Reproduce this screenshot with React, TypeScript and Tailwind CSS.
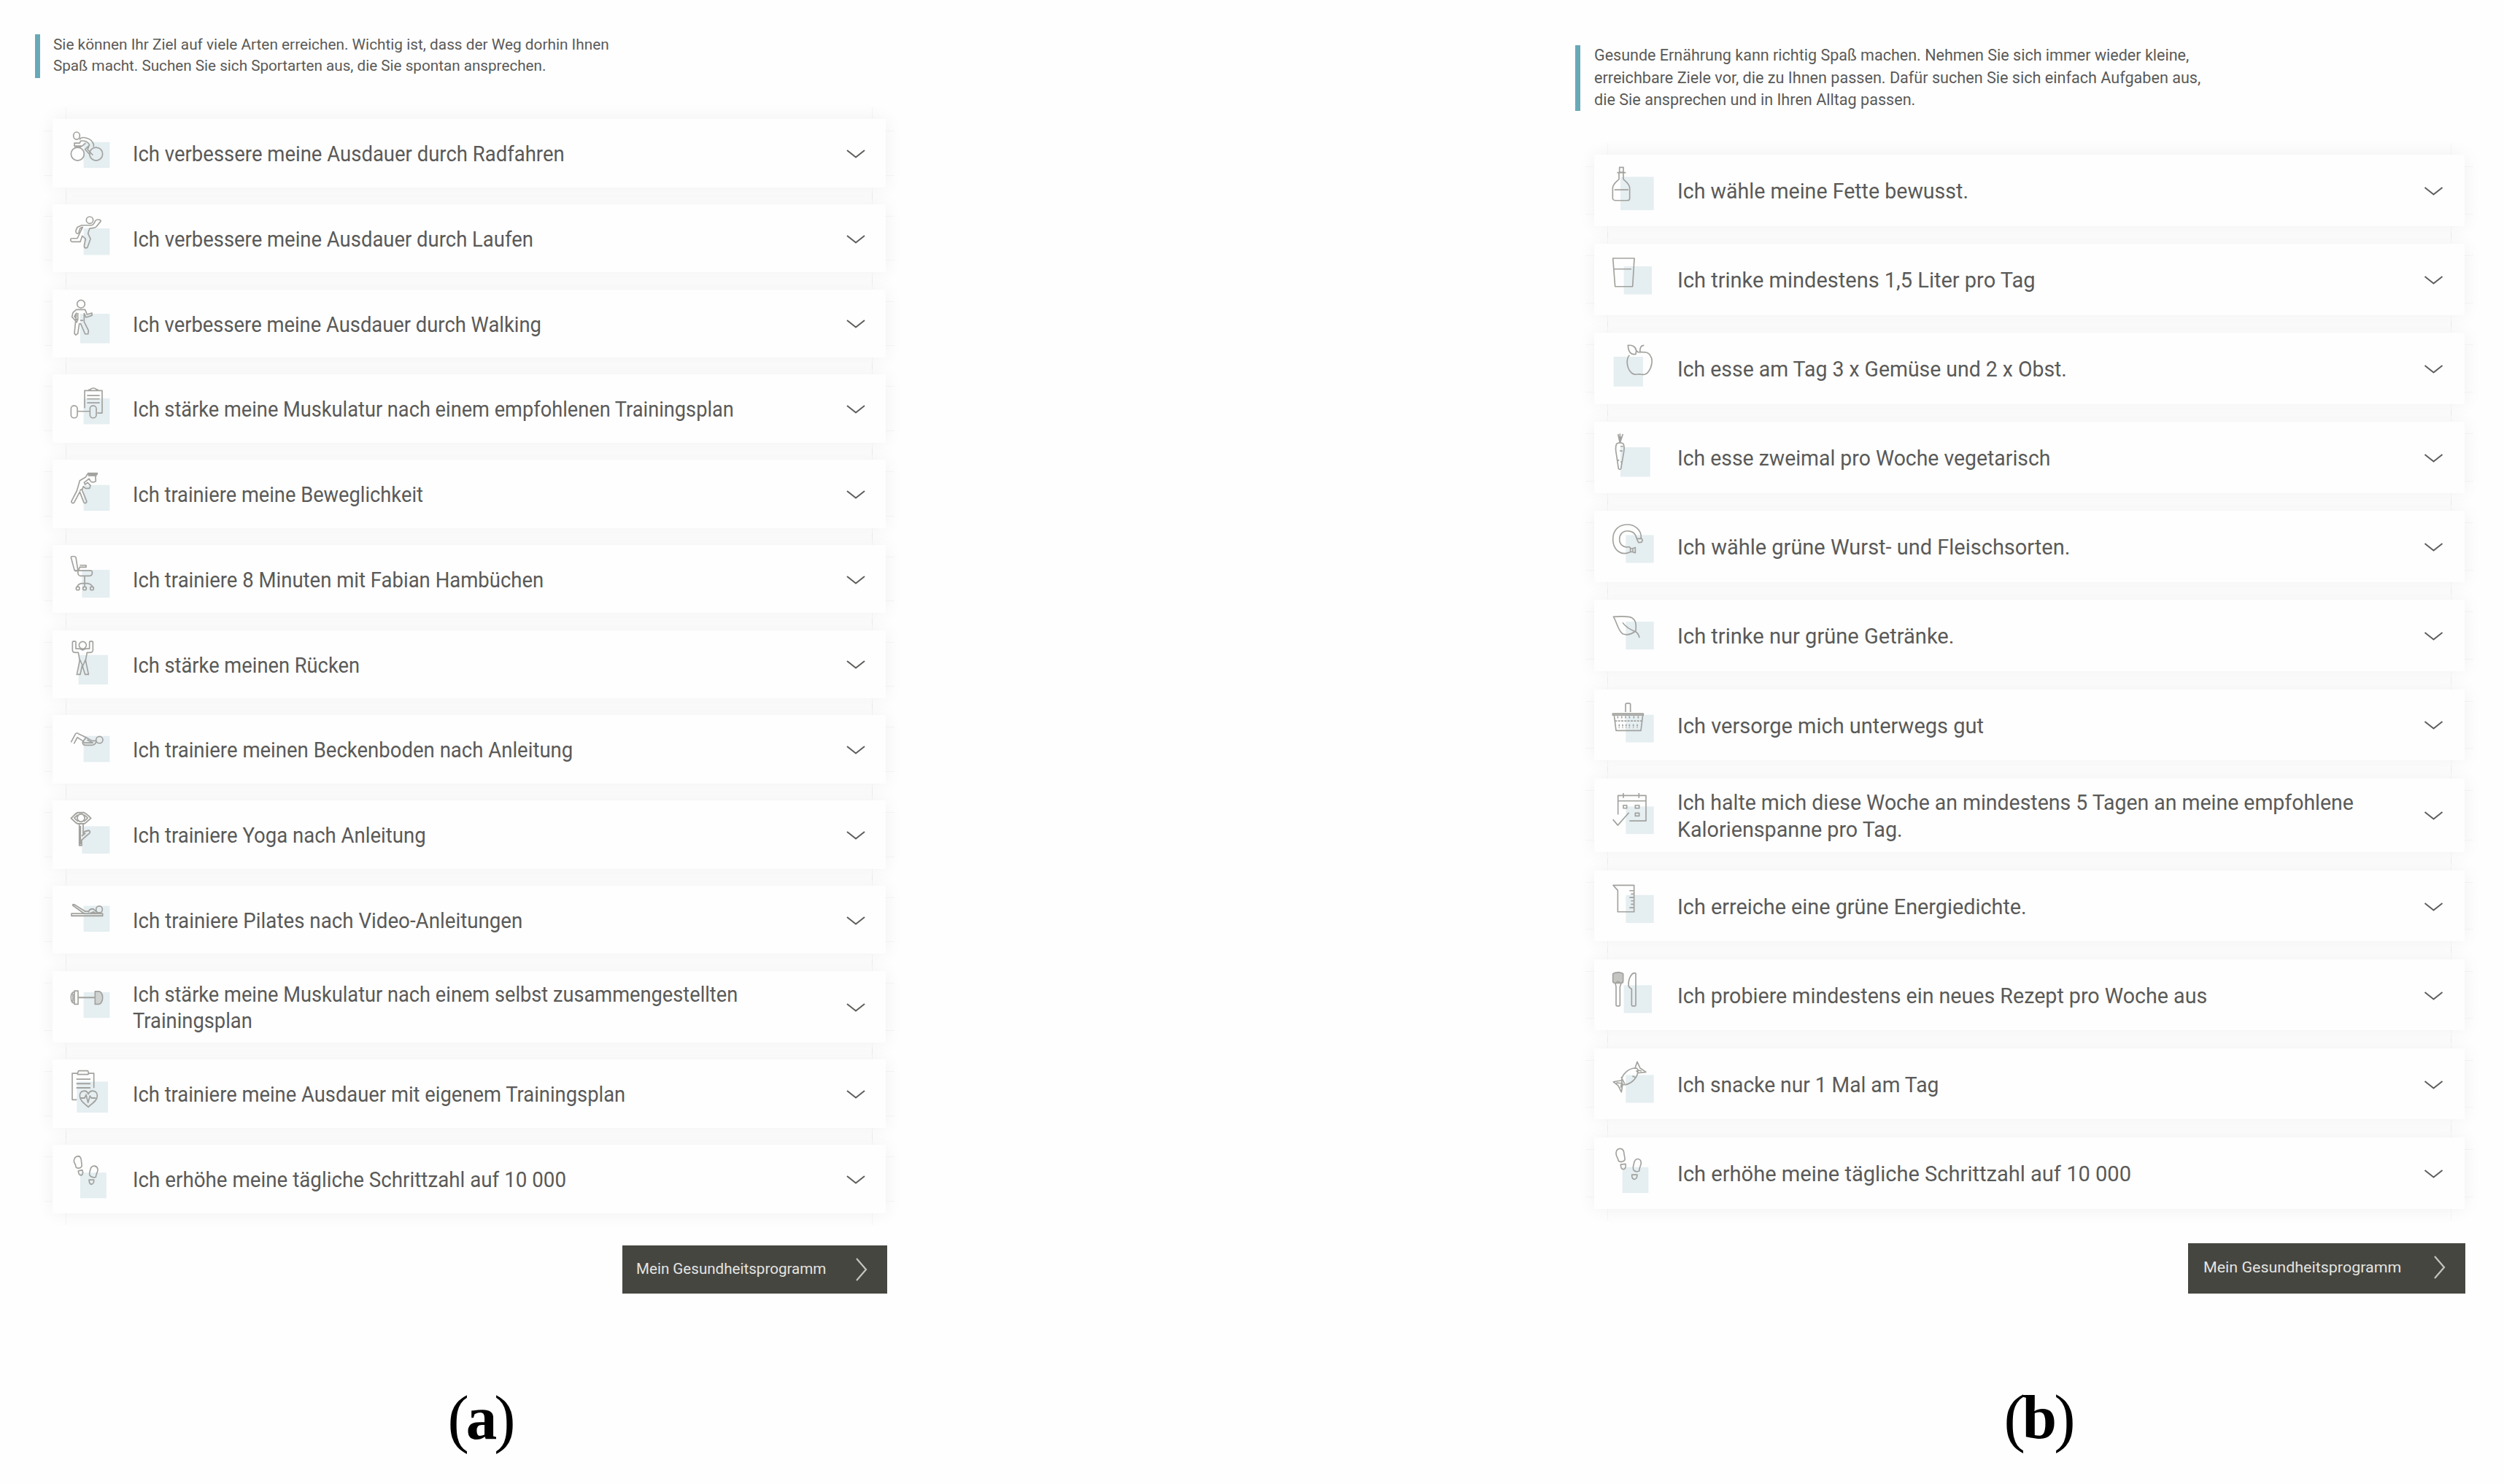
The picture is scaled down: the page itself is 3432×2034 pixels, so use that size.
import { useLayoutEffect, useRef, type ReactNode } from "react";

/* A single line of text, condensed horizontally to the given width. */
function FitLine({ text, width }: { text: string; width: number }) {
  const ref = useRef<HTMLSpanElement>(null);
  useLayoutEffect(() => {
    const el = ref.current;
    if (el) el.style.transform = `scaleX(${width / el.offsetWidth})`;
  }, [text, width]);
  return (
    <span className="block" style={{ width }}>
      <span ref={ref} className="inline-block origin-left whitespace-nowrap align-top">
        {text}
      </span>
    </span>
  );
}

type Line = [string, number];
type Item = {
  lines: Line[];
  /* origin and height of the drawing area */
  view: [number, number];
  /* tinted square behind the drawing */
  tint: [number, number, number, number];
  art: ReactNode;
};

const exercise: Item[] = [
  {
    lines: [["Ich verbessere meine Ausdauer durch Radfahren", 592]],
    view: [39, 280],
    tint: [164, 134, 107, 106],
    art: (
      <>
        <circle cx="139" cy="183" r="27" />
        <circle cx="215" cy="183" r="27" />
        <ellipse cx="135" cy="108" rx="13" ry="15" />
        <path d="M147 124c8-16 50-8 58 20v10M150 130c16-4 32 2 38 16l-18 18 20 22M152 128l-4 10h-22v12h32l14-12M158 150l-12 6h-20M186 150l-6 14 22 24" />
      </>
    ),
  },
  {
    lines: [["Ich verbessere meine Ausdauer durch Laufen", 549]],
    view: [390, 280],
    tint: [164, 489, 107, 109],
    art: (
      <>
        <circle cx="189" cy="455" r="14" />
        <path d="M156 476h38c10 0 14-8 18-18 6-8 24-6 22 2l-18 22c-8 8-18 4-28 8l-6 20 10 22-12 34c-4 6-14 4-14-4l6-30-14-12-8 24h-34c-8-2-8-14 0-14h22l14-30 8-16-10 4-4 10-2 10c-8 6-14-2-12-10l6-14z" />
      </>
    ),
  },
  {
    lines: [["Ich verbessere meine Ausdauer durch Walking", 560]],
    view: [740, 280],
    tint: [150, 839, 121, 121],
    art: (
      <>
        <circle cx="153" cy="799" r="16" />
        <path d="M134 822h36l8 20 20-6v10l-24 8-8-16v34l18 36-2 14h-12l-18-42h-6l-6 40-8 6-6-6 8-84-8 14 12 16-2 8-20-22 4-18zM140 836v30M150 866h12" />
      </>
    ),
  },
  {
    lines: [["Ich stärke meine Muskulatur nach einem empfohlenen Trainingsplan", 824]],
    view: [1089, 280],
    tint: [164, 1188, 107, 106],
    art: (
      <>
        <path d="M168 1228v-72h18v-4h6c2-8 22-8 24 0h6v4h18v92h-20M186 1156h34M178 1176h52M178 1190h52M178 1206h52M138 1241h52" />
        <rect x="112" y="1218" width="26" height="50" rx="12" />
        <rect x="190" y="1218" width="26" height="50" rx="12" />
      </>
    ),
  },
  {
    lines: [["Ich trainiere meine Beweglichkeit", 398]],
    view: [30, 280],
    tint: [164, 134, 107, 106],
    art: (
      <>
        <path d="M180 88h42M182 94h36" strokeWidth="9" />
        <path d="M180 88l-8 14-24 14-12 42-22 42c-2 8 8 12 12 4l22-42 16 42c4 8 14 4 12-4l-18-44 4-16 10 8h16l4-12-12-12-10 8-4-8 20-16 6 10c4 6 16 6 22 0l-2-22M148 158l8-8" />
      </>
    ),
  },
  {
    lines: [["Ich trainiere 8 Minuten mit Fabian Hambüchen", 563]],
    view: [381, 280],
    tint: [157, 483, 114, 114],
    art: (
      <>
        <path d="M112 432c0-6 18-6 20 0l8 50c0 6-12 8-14 2zM126 484l14 4M148 464h26v8h-26l-6 14M142 486h52c8 0 8 22-6 22h-38c-8 0-12-12-8-22zM168 508v42M138 552c2-10 10-14 30-14s28 4 32 14" />
        <circle cx="140" cy="559" r="7" />
        <circle cx="168" cy="559" r="7" />
        <circle cx="198" cy="559" r="7" />
      </>
    ),
  },
  {
    lines: [["Ich stärke meinen Rücken", 311]],
    view: [731, 280],
    tint: [143, 832, 121, 121],
    art: (
      <>
        <circle cx="160" cy="792" r="15" />
        <path d="M118 780c0-6 14-6 14 0v26h14l14 6 14-6h14v-26c0-6 14-6 14 0v32c0 6-6 10-12 10h-12l-6 32 12 58h-14l-12-38-8 38h-14l12-58-6-32h-12c-8 0-12-4-12-10zM148 850l14 30M174 846l-12 28" />
      </>
    ),
  },
  {
    lines: [["Ich trainiere meinen Beckenboden nach Anleitung", 603]],
    view: [1080, 280],
    tint: [164, 1166, 107, 107],
    art: (
      <>
        <circle cx="229" cy="1182" r="14" />
        <path d="M112 1192l18-34c4-6 10-4 14 0l30 14 24 14h18M124 1198l14-26 22 14 6 8M174 1172l-14 18c-2 8 4 14 12 14h24c12 0 18-8 20-16M164 1194h40M178 1182l20 10" />
      </>
    ),
  },
  {
    lines: [["Ich trainiere Yoga nach Anleitung", 402]],
    view: [44, 245],
    tint: [157, 137, 114, 98],
    art: (
      <>
        <path d="M112 108c12-8 18-18 28-20h26c12 4 18 12 28 20-12 8-18 16-28 20h-26c-12-4-16-12-28-20zM124 108l16-12M182 108l-16-12M126 108l16 12M180 108l-16 12" />
        <ellipse cx="153" cy="107" rx="15" ry="14" />
        <path d="M146 130v76h10v-20l32-24c4-4 2-10-4-10l-16 4-6 8v-34M156 172l16-10M151 136v66" />
      </>
    ),
  },
  {
    lines: [["Ich trainiere Pilates nach Video-Anleitungen", 534]],
    view: [350, 245],
    tint: [164, 422, 107, 93],
    art: (
      <>
        <ellipse cx="228" cy="435" rx="13" ry="12" />
        <path d="M114 450h128v8H114zM118 420c2-4 8-2 12 0l40 22h14M118 420l48 30M184 446c2-14 18-16 26-8l10 10M188 450l16-6 10 6" />
      </>
    ),
  },
  {
    lines: [
      ["Ich stärke meine Muskulatur nach einem selbst zusammengestellten", 829],
      ["Trainingsplan", 164],
    ],
    view: [657, 245],
    tint: [164, 733, 107, 92],
    art: (
      <>
        <path d="M126 728h15v48h-15zM126 732c-8 0-14 6-14 20s6 20 14 20M120 738v28M141 752h70" />
        <path d="M211 730h16c8 0 15 10 15 22s-7 24-15 24h-16z" fill="#cfd4d3" />
      </>
    ),
  },
  {
    lines: [["Ich trainiere meine Ausdauer mit eigenem Trainingsplan", 675]],
    view: [975, 245],
    tint: [136, 1055, 128, 111],
    art: (
      <path d="M136 1120h-19v-95h22l4-9h38l4 9h21v53M139 1025v4h44v-4M134 1046h58M134 1062h58M134 1077h58M183 1146c-18-14-35-24-35-40 0-20 28-24 35-6 8-18 37-14 37 6 0 16-19 26-37 40zM148 1114h20l6-12 8 28 8-24 6 8h18" />
    ),
  },
  {
    lines: [["Ich erhöhe meine tägliche Schrittzahl auf 10 000", 594]],
    view: [1278, 245],
    tint: [150, 1378, 107, 92],
    art: (
      <path d="M132 1358c0-10-8-14-8-22 2-18 26-24 30-4 0 10 4 18 2 24-6 8-20 8-24 2zM142 1372l16-3c4 8 4 14-2 18-8 2-14-4-14-15zM188 1386c-2-10 4-16 6-26 8-10 26-6 28 6 2 10-8 16-8 28-8 4-22 0-26-8zM186 1404h20c2 18-20 24-20 0z" />
    ),
  },
];

const nutrition: Item[] = [
  {
    lines: [["Ich wähle meine Fette bewusst.", 399]],
    view: [6, 292],
    tint: [123, 97, 137, 137],
    art: (
      <path d="M119 58h16v20h-16zM109 80h36M117 82v24c-6 8-26 18-26 38v40c0 6 6 10 12 10h48c6 0 10-4 10-10v-40c0-20-20-30-26-38v-24M98 150h58" />
    ),
  },
  {
    lines: [["Ich trinke mindestens 1,5 Liter pro Tag", 491]],
    view: [375, 292],
    tint: [137, 468, 115, 115],
    art: <path d="M92 435h88l-7 116h-72zM98 479h70" />,
  },
  {
    lines: [["Ich esse am Tag 3 x Gemüse und 2 x Obst.", 534]],
    view: [740, 292],
    tint: [95, 839, 121, 122],
    art: (
      <path d="M160 832c-14 14-12 50 4 68 10 14 24 12 38 10 14 4 26 4 36-10 14-18 20-50 8-66-10-18-28-14-44-14h-8M154 792c16-2 32 4 34 22l-2 14c-20 4-30-8-32-36zM204 820c-2-16 2-28 16-28M188 814l8 6" />
    ),
  },
  {
    lines: [["Ich esse zweimal pro Woche vegetarisch", 511]],
    view: [1105, 292],
    tint: [123, 1210, 122, 121],
    art: (
      <path d="M121 1192l-8-36M121 1192v-38M121 1192l12-36M116 1166l5 12 6-12M107 1196c6-6 22-6 28 0 4 6 4 24 0 44l-10 58c-2 4-8 4-10 0l-8-54c-4-20-4-40 0-48zM123 1206h12M120 1224l12 2M110 1262l8 2M124 1270h8" />
    ),
  },
  {
    lines: [["Ich wähle grüne Wurst- und Fleischsorten.", 538]],
    view: [63, 292],
    tint: [145, 163, 115, 114],
    art: (
      <path d="M190 178c-4-20-18-32-38-32-20 0-33 14-33 34s14 34 33 32c6-2 12 0 12 8v12c-40 20-72-10-72-52s28-60 60-60 56 24 56 50l-2 8zM190 180l8 14 12-2 4-8-6-10M164 218h8l12-4v22l-12-4h-8M174 218v12" />
    ),
  },
  {
    lines: [["Ich trinke nur grüne Getränke.", 379]],
    view: [430, 292],
    tint: [145, 520, 115, 114],
    art: (
      <path d="M94 500c30-2 60-4 76 4 18 10 18 30 16 54-18 14-34 20-54 12-20-14-24-50-38-70zM132 524c12 18 30 28 54 38 8 4 12 12 15 24" />
    ),
  },
  {
    lines: [["Ich versorge mich unterwegs gut", 420]],
    view: [795, 292],
    tint: [145, 899, 115, 113],
    art: (
      <>
        <path d="M91 894h126v6H91zM97 900l8 64h102l8-64M144 888v-32c0-6 20-6 20 0v32" />
        <path d="M112 904v12M128 904v12M144 904v12M160 904v12M178 904v12M196 904v12M100 924h112M118 938v16M132 938v16M146 938v16M160 938v16M176 938v16M192 938v16" strokeDasharray="9 4" />
      </>
    ),
  },
  {
    lines: [
      ["Ich halte mich diese Woche an mindestens 5 Tagen an meine empfohlene", 927],
      ["Kalorienspanne pro Tag.", 309],
    ],
    view: [1162, 292],
    tint: [145, 1277, 115, 113],
    art: (
      <path d="M113 1310v-78h115v104h-68M113 1254h115M135 1222v20M199 1222v20M92 1330l20 24 46-52M135 1272h14v12h-14zM184 1272h16v12h-16zM184 1304h16v12h-16z" />
    ),
  },
  {
    lines: [["Ich erreiche eine grüne Energiedichte.", 479]],
    view: [39, 292],
    tint: [145, 140, 115, 115],
    art: (
      <path d="M93 100h86v109h-67v-88zM160 122h18M166 136h12M160 150h18M166 164h12M166 178h12M160 192h18" />
    ),
  },
  {
    lines: [["Ich probiere mindestens ein neues Rezept pro Woche aus", 726]],
    view: [405, 292],
    tint: [137, 511, 115, 114],
    art: (
      <>
        <path d="M92 464v30c0 6 6 8 10 8h24c6 0 8-4 8-8v-30l-8-4-12-2-14 2z" fill="#c4c5c2" />
        <path d="M102 502l3 16v74c0 6 16 6 16 0v-74l5-16M106 502c2-8 12-8 14 0M186 592V462c-16-6-30 20-30 46 0 8 4 14 13 18v66c0 6 17 6 17 0z" />
      </>
    ),
  },
  {
    lines: [["Ich snacke nur 1 Mal am Tag", 358]],
    view: [773, 292],
    tint: [145, 882, 115, 114],
    art: (
      <path d="M128 908c-2-28 30-56 60-54 6 2 8 10 6 20-6 26-32 48-58 48-6-2-8-8-8-14zM182 856l10-28 12 26 24 16-34 4M194 862l16 4M128 904l-34 6 20 16 13 26 5-34M106 914l20 2M124 934l4-18M126 890l14 28M188 864l8 10M172 886l12 6" />
    ),
  },
  {
    lines: [["Ich erhöhe meine tägliche Schrittzahl auf 10 000", 622]],
    view: [1138, 292],
    tint: [131, 1260, 107, 106],
    art: (
      <path d="M115 1234c-2-14-12-18-10-34 4-22 28-20 32-2 0 12 6 24 4 32-6 10-20 10-26 4zM124 1249l20-2c2 12 0 20-8 22-8 0-12-8-12-20zM176 1270c-4-12 2-18 4-32 8-18 26-14 28 4 0 12-8 18-8 34-8 4-20 2-24-6zM170 1291h22c0 26-24 24-22 0z" />
    ),
  },
];

function Card({ item, side }: { item: Item; side: "left" | "right" }) {
  const left = side === "left";
  const [y0, h] = item.view;
  const [tx, ty, tw, th] = item.tint;
  const tall = item.lines.length > 1;
  return (
    <li
      className={
        "relative flex items-center bg-[#fefefe] shadow-[0_0_24px_rgba(0,0,0,0.06)] " +
        (left ? (tall ? "h-[98.5px]" : "h-[93.5px]") : tall ? "h-[101.5px]" : "h-[97.5px]")
      }
    >
      <span className="absolute -top-4 left-[18px] h-4 w-px bg-black/3" />
      <span className="absolute -bottom-4 left-[18px] h-4 w-px bg-black/3" />
      <span className="absolute -top-4 right-[18px] h-4 w-px bg-black/3" />
      <span className="absolute -bottom-4 right-[18px] h-4 w-px bg-black/3" />
      <span className="absolute -left-3 top-4 h-px w-3 bg-black/3" />
      <span className="absolute -left-3 bottom-4 h-px w-3 bg-black/3" />
      <span className="absolute -right-3 top-4 h-px w-3 bg-black/3" />
      <span className="absolute -right-3 bottom-4 h-px w-3 bg-black/3" />
      <svg
        className={left ? "h-[93.5px] w-[90px] shrink-0 self-start" : "h-[97.5px] w-[90px] shrink-0 self-start"}
        viewBox={`${left ? 36 : 15} ${y0} 270 ${h}`}
        preserveAspectRatio="none"
        fill="none"
        stroke="#a2a29e"
        strokeWidth="5"
        strokeLinejoin="round"
      >
        <rect x={tx} y={ty} width={tw} height={th} fill="#e5eef1" stroke="none" />
        {item.art}
      </svg>
      <div
        className={
          "grow text-[30px] text-[#5a5a58] " +
          (left ? "pl-[20px] pt-[2px] leading-[35.3px]" : "pl-[24px] pt-[2px] leading-[37.5px]")
        }
      >
        {item.lines.map(([text, width]) => (
          <FitLine key={text} text={text} width={width} />
        ))}
      </div>
      <svg
        className={left ? "mr-[28px] mt-[2px] h-[14px] w-[26px] shrink-0" : "mr-[29px] mt-[2px] h-[14px] w-[27px] shrink-0"}
        viewBox="0 0 26 14"
        fill="none"
        stroke="#5d5d5b"
        strokeWidth="2"
      >
        <path d="M1 2l12 9.500L25 2" />
      </svg>
    </li>
  );
}

function ProgramButton({ side }: { side: "left" | "right" }) {
  const left = side === "left";
  return (
    <button
      className={
        "flex items-center justify-between self-end bg-[#464641] text-[20.5px] text-[#e4e4e0] " +
        (left ? "mt-[44px] h-[66px] w-[363px] pl-[19px] pr-[27px]" : "mt-[47px] h-[69px] w-[380px] pb-[2px] pl-[21px] pr-[27px]")
      }
    >
      <span className="text-left">
        <FitLine text="Mein Gesundheitsprogramm" width={left ? 260 : 271} />
      </span>
      <svg className="h-[34px] w-[17px]" viewBox="0 0 17 34" fill="none" stroke="#c4c4c0" strokeWidth="2.200">
        <path d="M2 2l13 15L2 32" />
      </svg>
    </button>
  );
}

function Caption({ letter }: { letter: string }) {
  return (
    <span className="font-['Liberation_Serif',serif] text-[88px] leading-[91px] tracking-[-4px] text-black">
      <span className="relative top-[2px]">(</span>
      <b className="text-[85px]">{letter}</b>
      <span className="relative top-[2px]">)</span>
    </span>
  );
}

export default function App() {
  return (
    <main className="flex h-[2034px] w-[3432px] justify-between overflow-hidden bg-[#fefefe] pl-12 pr-[53px] font-['Roboto',sans-serif]">
      <section className="flex w-[1168px] flex-col pt-[47px]">
        <div className="flex h-[60px] flex-col justify-center border-l-[7px] border-[#68a9b7] pb-[2px] pl-[18px] text-[21px] leading-[28.700px] text-[#5a5a58]">
          <FitLine text="Sie können Ihr Ziel auf viele Arten erreichen. Wichtig ist, dass der Weg dorhin Ihnen" width={762} />
          <FitLine text="Spaß macht. Suchen Sie sich Sportarten aus, die Sie spontan ansprechen." width={675} />
        </div>
        <ul className="mt-[56px] ml-6 mr-[2px] flex flex-col gap-[23.25px]">
          {exercise.map((item) => (
            <Card key={item.lines[0][0]} item={item} side="left" />
          ))}
        </ul>
        <ProgramButton side="left" />
        <div className="mt-[124px] flex justify-center pl-[52px]">
          <Caption letter="a" />
        </div>
      </section>
      <section className="flex w-[1220px] flex-col pt-[62px]">
        <div className="flex h-[90px] flex-col justify-center border-l-[7px] border-[#68a9b7] pl-[19px] text-[21.500px] leading-[30.700px] text-[#5a5a58]">
          <FitLine text="Gesunde Ernährung kann richtig Spaß machen. Nehmen Sie sich immer wieder kleine," width={815} />
          <FitLine text="erreichbare Ziele vor, die zu Ihnen passen. Dafür suchen Sie sich einfach Aufgaben aus," width={831} />
          <FitLine text="die Sie ansprechen und in Ihren Alltag passen." width={440} />
        </div>
        <ul className="mt-[60px] ml-[26px] mr-px flex flex-col gap-[24.6px]">
          {nutrition.map((item) => (
            <Card key={item.lines[0][0]} item={item} side="right" />
          ))}
        </ul>
        <ProgramButton side="right" />
        <div className="mt-[123px] flex justify-center pl-[49px]">
          <Caption letter="b" />
        </div>
      </section>
    </main>
  );
}
